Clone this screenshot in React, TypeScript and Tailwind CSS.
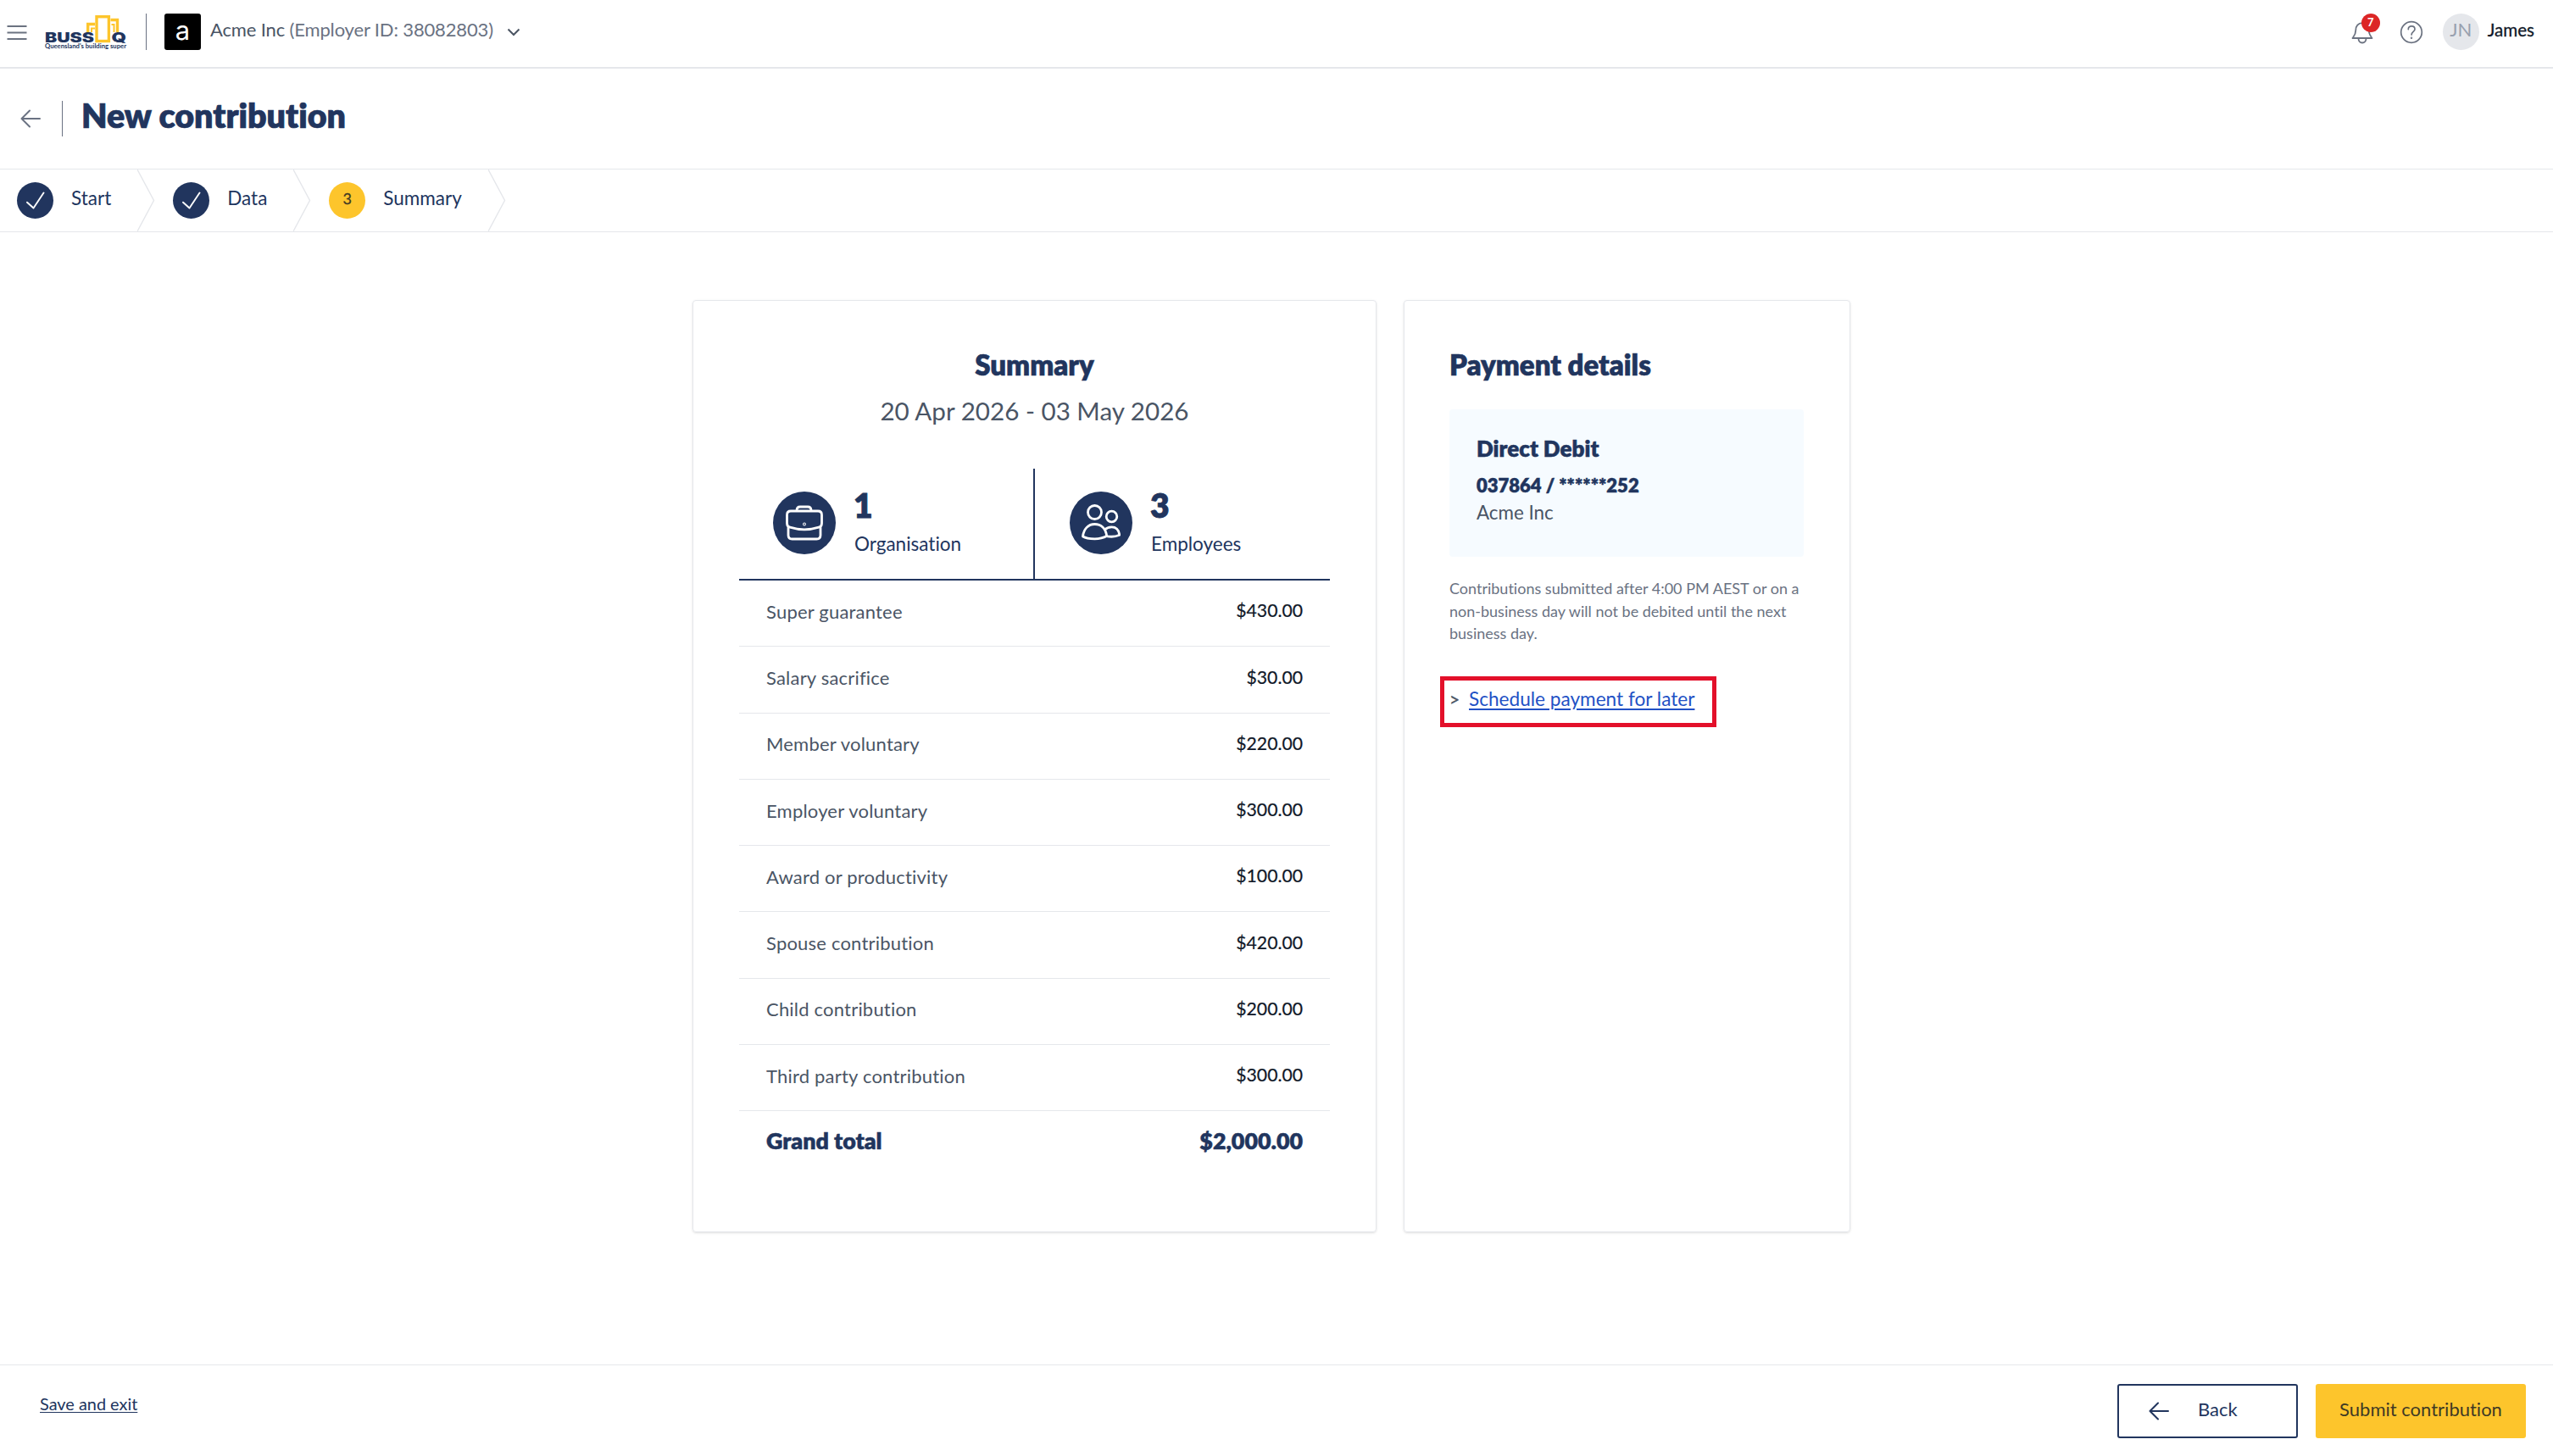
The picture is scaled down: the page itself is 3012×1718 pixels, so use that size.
const steps = [
  { label: "Start", done: true },
  { label: "Data", done: true },
  { label: "Summary", done: false },
];

const contributions = [
  { label: "Super guarantee", amount: "$430.00" },
  { label: "Salary sacrifice", amount: "$30.00" },
  { label: "Member voluntary", amount: "$220.00" },
  { label: "Employer voluntary", amount: "$300.00" },
  { label: "Award or productivity", amount: "$100.00" },
  { label: "Spouse contribution", amount: "$420.00" },
  { label: "Child contribution", amount: "$200.00" },
  { label: "Third party contribution", amount: "$300.00" },
];

export default function App() {
  return (
    <div className="flex h-[1718px] w-[3012px] flex-col overflow-hidden bg-white font-['Lato',sans-serif] text-[22px] text-[#21355e] [font-variant-ligatures:none]">
      <Header />
      <div className="flex h-[118px] items-center pl-6">
        <ArrowLeft className="h-6 w-6 text-gray-500" />
        <span className="ml-[25px] h-[42px] w-px bg-gray-500" />
        <h1 className="ml-[22px] pb-[9px] text-[39.4px] font-extrabold leading-[48px] [-webkit-text-stroke:0.7px]">
          New contribution
        </h1>
      </div>
      <Stepper />
      <main className="flex flex-1 items-start gap-8 pl-[817px] pt-20">
        <SummaryCard />
        <PaymentCard />
      </main>
      <Footer />
    </div>
  );
}

function Header() {
  return (
    <header className="flex h-[81px] shrink-0 items-center border-b-2 border-gray-200 pb-1 pl-2">
      <svg viewBox="0 0 24 18" className="h-[18px] w-6" stroke="#6b7280" strokeWidth="1.9">
        <path d="M0.5 2h23M0.5 9.5h23M0.5 17h23" />
      </svg>
      <Logo />
      <span className="ml-[22px] h-[43px] w-px bg-gray-500" />
      <span className="ml-[21px] flex h-[43px] w-[43px] items-center justify-center rounded-[3px] bg-black pb-[5px] font-['Inter',sans-serif] text-[31px] leading-none text-white">
        a
      </span>
      <p className="ml-[11px] pb-1.5 tracking-[-0.15px] text-gray-500">
        <span className="text-gray-600">Acme Inc</span> (Employer ID: 38082803)
      </p>
      <svg viewBox="0 0 16 10" className="ml-4 h-2.5 w-4" fill="none" stroke="#4b5563" strokeWidth="2">
        <path d="M1.5 1.5 8 8l6.5-6.5" />
      </svg>

      <div className="ml-auto flex items-center pr-[22px]">
        <span className="relative flex">
          <svg viewBox="0 0 26 28" className="h-7 w-[26px]" fill="none" stroke="#6b7280" strokeWidth="1.8" strokeLinejoin="round">
            <path d="M13 3.2C8 3.2 5.3 7 5.3 11.5c0 5-1.7 6.7-3.8 9.5h23c-2.1-2.8-3.8-4.5-3.8-9.5C20.7 7 18 3.2 13 3.2Z" />
            <path d="M8.5 21.5a4.5 5 0 0 0 9 0" />
          </svg>
          <span className="absolute -top-2 left-3 flex h-[22px] w-[22px] items-center justify-center rounded-full bg-[#dc2626] text-[13px] font-bold leading-none text-white">
            7
          </span>
        </span>
        <svg viewBox="0 0 28 28" className="ml-[31px] h-7 w-7" fill="none" stroke="#6b7280" strokeWidth="1.7" strokeLinecap="round">
          <circle cx="14" cy="14" r="12.3" />
          <path d="M10.3 10.6c0-2.3 1.7-3.7 3.9-3.7s3.8 1.4 3.8 3.5c0 3-3.9 3.1-3.9 6.6" />
          <circle cx="14" cy="20.7" r="0.4" />
        </svg>
        <span className="ml-[23px] flex h-[43px] w-[43px] items-center justify-center rounded-full bg-gray-200 pb-[5px] leading-none text-gray-400">
          JN
        </span>
        <span className="ml-[10px] pb-[5px] text-[20.6px] leading-none text-gray-900 [-webkit-text-stroke:0.3px]">James</span>
      </div>
    </header>
  );
}

function Logo() {
  return (
    <svg viewBox="0 0 98 44" className="ml-5 h-11 w-[98px] overflow-visible">
      <g fill="none" stroke="#fdc52c" strokeWidth="3.4">
        <path d="M51.7 22v-9.5h8.3M86.5 22V7.5h-8" />
        <path d="M56 22v-4.5h4M82.5 22v-9h-3" strokeWidth="2" />
        <rect x="62" y="3.7" width="14.4" height="28.8" />
      </g>
      <text x="1" y="33.5" fontFamily="Inter, sans-serif" fontWeight="900" fontSize="16" fill="#21355e" textLength="58" lengthAdjust="spacingAndGlyphs">
        BUSS
      </text>
      <text x="79.5" y="33.5" fontFamily="Inter, sans-serif" fontWeight="900" fontSize="16" fill="#21355e" textLength="17.5" lengthAdjust="spacingAndGlyphs">
        Q
      </text>
      <text x="1" y="40.7" fontFamily="Lato, sans-serif" fontWeight="700" fontSize="7.6" fill="#21355e" textLength="96" lengthAdjust="spacingAndGlyphs">
        Queensland's building super
      </text>
    </svg>
  );
}

function Stepper() {
  return (
    <nav className="flex h-[75px] shrink-0 items-center border-y border-gray-200">
      {steps.map((step, index) => (
        <div key={step.label} className="flex h-full items-center pl-5">
          {step.done ? (
            <span className="flex h-[43px] w-[43px] items-center justify-center rounded-full bg-[#21355e]">
              <svg viewBox="0 0 22 22" className="h-[22px] w-[22px]" fill="none" stroke="white" strokeWidth="1.9" strokeLinecap="round" strokeLinejoin="round">
                <path d="M1 12.7 8.5 19.5 20.5 1.5" />
              </svg>
            </span>
          ) : (
            <span className="flex h-[43px] w-[43px] items-center justify-center rounded-full bg-[#fdc52c] pb-1 text-[18px] text-[#3f3a24] [-webkit-text-stroke:0.3px]">
              {index + 1}
            </span>
          )}
          <span className="ml-[21px] pb-[5px] text-[22.5px]">{step.label}</span>
          <svg viewBox="0 0 22 73" className="ml-[31px] h-full w-[22px]" fill="none" stroke="#e5e7eb" strokeWidth="1.4">
            <path d="M0 0 19.500 36.500 0 73" />
          </svg>
        </div>
      ))}
    </nav>
  );
}

function SummaryCard() {
  return (
    <section className="flex h-[1100px] w-[807px] flex-col rounded border border-gray-200 px-[54px] pt-[55px] shadow-sm">
      <h2 className="text-center text-[33px] font-extrabold leading-10 [-webkit-text-stroke:0.6px]">Summary</h2>
      <p className="mt-[17px] text-center text-[29.6px] leading-9 text-gray-600">20 Apr 2026 - 03 May 2026</p>

      <div className="mt-[50px] flex h-[132px] shrink-0 border-b-2 border-[#21355e]">
        <div className="flex w-[349px] items-center border-r-2 border-[#21355e] pb-0.5 pl-10">
          <span className="flex h-[74px] w-[74px] items-center justify-center rounded-full bg-[#21355e]">
            <BriefcaseIcon />
          </span>
          <Stat value="1" label="Organisation" />
        </div>
        <div className="flex items-center pb-0.5 pl-[41px]">
          <span className="flex h-[74px] w-[74px] items-center justify-center rounded-full bg-[#21355e]">
            <PeopleIcon />
          </span>
          <Stat value="3" label="Employees" />
        </div>
      </div>

      <ul>
        {contributions.map((item) => (
          <li
            key={item.label}
            className="flex h-[78.3px] items-center justify-between border-b border-gray-200 px-8 pb-[5px]"
          >
            <span className="tracking-[0.2px] text-gray-600">{item.label}</span>
            <span className="text-[21.2px] text-gray-900 [-webkit-text-stroke:0.2px]">{item.amount}</span>
          </li>
        ))}
      </ul>
      <div className="flex h-[70px] items-center justify-between px-8 text-[26.8px] font-extrabold [-webkit-text-stroke:0.5px]">
        <span>Grand total</span>
        <span>$2,000.00</span>
      </div>
    </section>
  );
}

function Stat({ value, label }: { value: string; label: string }) {
  return (
    <div className="ml-[22px]">
      <p className="-ml-px text-[39px] font-extrabold leading-[44px] [-webkit-text-stroke:0.8px]">{value}</p>
      <p className="mt-1.5 text-[22.5px] leading-9">{label}</p>
    </div>
  );
}

function PaymentCard() {
  return (
    <section className="h-[1100px] w-[527px] rounded border border-gray-200 pl-[53px] pt-[55px] shadow-sm">
      <h2 className="text-[33px] font-extrabold leading-10 [-webkit-text-stroke:0.6px]">Payment details</h2>
      <div className="mt-[33px] h-[174px] w-[418px] rounded bg-[#f6fbff] pl-8 pt-7">
        <h3 className="text-[26px] font-extrabold leading-9 [-webkit-text-stroke:0.5px]">Direct Debit</h3>
        <p className="mt-2.5 font-extrabold leading-8 [-webkit-text-stroke:0.5px]">037864 / ******252</p>
        <p className="text-[22.4px] leading-8 text-gray-600">Acme Inc</p>
      </div>
      <p className="mt-6 w-[424px] text-[18px] leading-[26.5px] text-gray-500">
        Contributions submitted after 4:00 PM AEST or on a non-business day will not be debited until the next
        business day.
      </p>
      <div className="-ml-[11px] mt-[37px] flex h-[60px] w-[326px] items-center border-[5px] border-[#e3102a] pb-1.5 pl-1.5">
        <span className="w-3 text-[21px] text-gray-600 [-webkit-text-stroke:0.4px]">&gt;</span>
        <a href="#" className="ml-[11px] whitespace-nowrap text-[22.6px] text-[#2251c5] underline decoration-2 underline-offset-[3px]">
          Schedule payment for later
        </a>
      </div>
    </section>
  );
}

function Footer() {
  return (
    <footer className="flex h-[108px] shrink-0 items-start border-t border-gray-200 pl-[47px] pr-8 pt-[22px]">
      <a href="#" className="mt-[11px] text-[19.9px] leading-6 underline decoration-1 underline-offset-2">
        Save and exit
      </a>
      <button className="ml-auto flex h-16 w-[213px] items-center rounded-[3px] border-2 border-[#21355e] pb-[5px] pl-[35px]">
        <ArrowLeft className="mt-1 h-6 w-6" />
        <span className="ml-[34px]">Back</span>
      </button>
      <button className="ml-[21px] h-16 w-[248px] rounded-[3px] bg-[#fdc52c] pb-[5px] text-[#3f3a24]">
        Submit contribution
      </button>
    </footer>
  );
}

function ArrowLeft({ className }: { className?: string }) {
  return (
    <svg viewBox="0 0 24 24" className={className} fill="none" stroke="currentColor" strokeWidth="2" strokeLinecap="round" strokeLinejoin="round">
      <path d="M23 12H1.5M11 2.5 1.5 12l9.5 9.5" />
    </svg>
  );
}

function BriefcaseIcon() {
  return (
    <svg viewBox="0 0 46 46" className="h-[46px] w-[46px]" fill="none" stroke="white" strokeWidth="2.8" strokeLinecap="round" strokeLinejoin="round">
      <path d="M14 8.5c0-3 1.5-4.500 4-4.500h9c2.500 0 4 1.500 4 4.500" />
      <path d="M7 9h32c3 0 4.500 1.500 4.500 4.500v10c0 2.500-1 4-3.500 4.700-11 3.400-23 3.400-34 0-2.500-.7-3.500-2.200-3.500-4.700v-10C2.500 10.500 4 9 7 9Z" />
      <path d="M4 28.500v9c0 3 1.500 4.500 4.500 4.500h29c3 0 4.500-1.500 4.500-4.500v-9" />
      <circle cx="23" cy="24.5" r="0.5" />
    </svg>
  );
}

function PeopleIcon() {
  return (
    <svg viewBox="0 0 46 46" className="h-[46px] w-[46px]" fill="none" stroke="white" strokeWidth="2.8" strokeLinejoin="round">
      <circle cx="15.5" cy="10.5" r="8" />
      <circle cx="35.5" cy="15.5" r="6.3" />
      <path d="M15.500 24.500c7.500 0 13 5 14.200 14-4 2.300-9 3.300-14.200 3.300S5 41.300 1.500 39C2.500 30 8 24.500 15.500 24.500Z" />
      <path d="M27.500 31c2-2.200 5-3.200 8-3.200 5 0 8.500 3.500 9.300 9.500-4.500 2-10 2.300-14.500 1.500" />
    </svg>
  );
}
